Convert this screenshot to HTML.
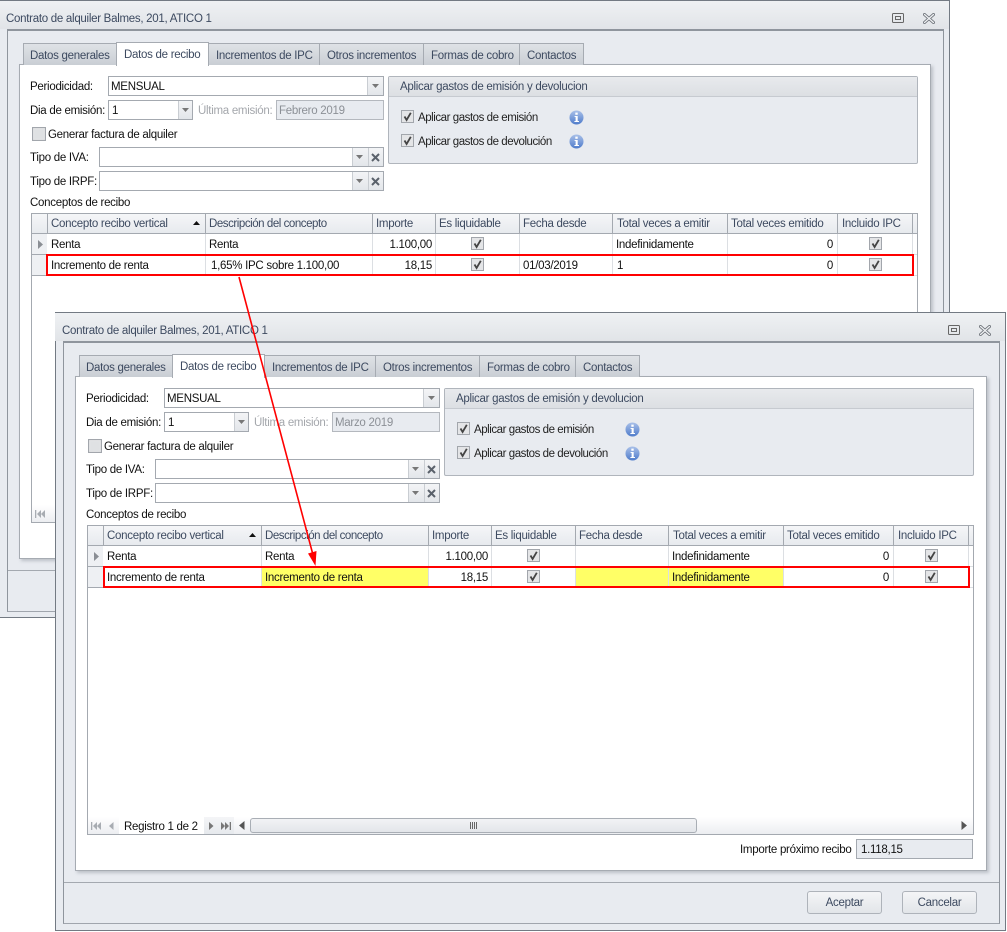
<!DOCTYPE html>
<html lang="es"><head><meta charset="utf-8"><title>Contrato de alquiler</title>
<style>
html,body{margin:0;padding:0;background:#fff}
#p{position:relative;width:1007px;height:932px;overflow:hidden;background:#fff;font:11.5px/14px "Liberation Sans",sans-serif;letter-spacing:-.28px;color:#111}
.w{position:absolute;width:0;height:0}
.w div,.w span,.w svg{position:absolute;box-sizing:border-box}
.b{left:-1px;top:0;width:951px;height:619px;background:#e8ebf0;border:1px solid #737a83;}
.tb{left:-1px;top:1px;width:950px;height:28px;background:linear-gradient(#eff1f3,#e1e4e8)}
.f{left:7px;top:29px;width:937px;height:583px;border:1px solid #8f959d;border-bottom-color:#a0a5ad;border-top-width:2px;background:#e8ebf0}
.sep{left:8px;top:570px;width:935px;height:1px;background:#a4a9b0}
.c{left:19px;top:64px;width:912px;height:495px;background:#fff;border:1px solid #a6abb2;box-shadow:2px 2px 3px rgba(110,115,125,.35)}
.tab{top:43px;height:22px;background:linear-gradient(#dfe2e6,#c9ced4);border:1px solid #a6abb2;border-bottom:0}
.tab.on{top:42px;height:24px;background:#fff;z-index:2}
span{white-space:nowrap;height:14px;margin-top:1px}
.t{color:#3d4a60;z-index:3}
.n{letter-spacing:-.45px}
.bx{background:#fff;border:1px solid #a4a9b0}
.dis{background:#e8ebf0;border:1px solid #b4b8be}
.btn{background:linear-gradient(#f3f4f6,#e3e6ea);border-left:1px solid #c9cdd2}
.g{left:388px;top:76px;width:530px;height:88px;background:#e8ebf0;border:1px solid #b0b5bc;border-radius:2px}
.gh{left:389px;top:77px;width:528px;height:20px;background:linear-gradient(#e8eaed,#dcdfe3);border-bottom:1px solid #c6cad0}
.grid{left:31px;top:213px;width:887px;height:310px;background:#fff;border:1px solid #a4a9b0}
.hd{left:32px;top:214px;width:885px;height:20px;background:linear-gradient(#f5f6f8,#e7eaee);border-bottom:1px solid #a4a9b0}
.ind{left:32px;width:15px;height:21px;background:#eef0f3;border-bottom:1px solid #a4a9b0}
.hl{top:214px;width:1px;height:20px;background:#a4a9b0}
.vl{top:234px;width:1px;height:42px;background:#dcdfe3}
.rl{left:47px;width:870px;height:1px;background:#dcdfe3}
.nav{left:32px;top:505px;width:885px;height:17px;background:linear-gradient(#fff,#eceef1)}
.red{border:2px solid #f00;z-index:5}
.r{text-align:right}
.bt{top:579px;width:75px;height:23px;background:linear-gradient(#f4f5f7,#e2e5e9);border:1px solid #aeb3ba;border-radius:3px;text-align:center;line-height:22px;color:#3d4a60}
</style></head><body>
<div id="p">
<svg width="0" height="0" style="position:absolute"><defs>
<symbol id="ck" viewBox="0 0 13 13"><rect x=".5" y=".5" width="12" height="12" fill="#e4e5e7" stroke="#a2a6ac"/><path d="M3.500 6.500 5.600 10 9.800 2.800" fill="none" stroke="#444" stroke-width="1.800"/></symbol>
<symbol id="uc" viewBox="0 0 13 13"><rect x=".5" y=".5" width="12" height="12" fill="#e4e5e7" stroke="#a2a6ac"/><rect x="2" y="2" width="9" height="9" fill="#dfe1e3"/></symbol>
<symbol id="in" viewBox="0 0 15 15"><defs><linearGradient id="ig" x1="0" y1="0" x2="0" y2="1"><stop offset="0" stop-color="#a9c0e8"/><stop offset="1" stop-color="#4f7ccb"/></linearGradient></defs><circle cx="7.500" cy="7.500" r="7" fill="url(#ig)"/><rect x="6.300" y="2.600" width="2.400" height="2.200" fill="#fff"/><path d="M5.600 6h3.100v5H10v1H5.400v-1h1.200V7H5.600z" fill="#fff"/></symbol>
<symbol id="dn" viewBox="0 0 7 4"><path d="M0 0h7L3.500 4z" fill="#777"/></symbol>
<symbol id="xx" viewBox="0 0 9 9"><path d="M1 1l7 7M8 1L1 8" stroke="#5a616b" stroke-width="2" fill="none"/></symbol>
<symbol id="rw" viewBox="0 0 5 9"><path d="M0 0l5 4.500L0 9z" fill="#8a8e94"/></symbol>
<symbol id="mx" viewBox="0 0 12 10"><rect x=".5" y=".5" width="11" height="9" rx="1" fill="none" stroke="#666"/><rect x="3.500" y="3.500" width="5" height="3" fill="none" stroke="#666"/></symbol>
<symbol id="cl" viewBox="0 0 12 11"><path d="M1.500 1.500l9 8M10.500 1.500l-9 8" stroke="#6a6f76" stroke-width="3" fill="none" stroke-linecap="round"/><path d="M1.500 1.500l9 8M10.500 1.500l-9 8" stroke="#eef0f2" stroke-width="1.400" fill="none" stroke-linecap="round"/></symbol>
</defs></svg>

<!-- WINDOW 1 -->
<div class="w" style="left:0;top:0">
<div class="b" style="height:618px"></div><div class="tb"></div>
<span style="left:6px;top:11px;color:#3d4a60">Contrato de alquiler Balmes, 201, ATICO 1</span>
<svg style="left:892px;top:13px" width="12" height="10"><use href="#mx"/></svg>
<svg style="left:923px;top:13px" width="12" height="11"><use href="#cl"/></svg>
<div class="f"></div><div class="sep"></div><div class="c"></div>
<div class="tab" style="left:23px;width:94px"></div><div class="tab on" style="left:116px;width:93px"></div><div class="tab" style="left:208px;width:112px"></div><div class="tab" style="left:319px;width:105px"></div><div class="tab" style="left:423px;width:97px"></div><div class="tab" style="left:519px;width:65px"></div>
<span class="t" style="left:30px;top:48px">Datos generales</span><span class="t" style="left:124px;top:47px">Datos de recibo</span><span class="t" style="left:216px;top:48px">Incrementos de IPC</span><span class="t" style="left:327px;top:48px">Otros incrementos</span><span class="t" style="left:431px;top:48px">Formas de cobro</span><span class="t" style="left:527px;top:48px">Contactos</span>
<span style="left:30px;top:79px">Periodicidad:</span><div class="bx" style="left:108px;top:76px;width:276px;height:20px"></div><div class="btn" style="left:367px;top:77px;width:16px;height:18px"></div><svg style="left:372px;top:84px" width="7" height="4"><use href="#dn"/></svg><span style="left:111px;top:79px">MENSUAL</span>
<span style="left:30px;top:103px">Dia de emisión:</span><div class="bx" style="left:108px;top:100px;width:85px;height:20px"></div><div class="btn" style="left:178px;top:101px;width:14px;height:18px"></div><svg style="left:182px;top:108px" width="7" height="4"><use href="#dn"/></svg><span style="left:112px;top:103px">1</span>
<span style="left:198px;top:103px;color:#a4a7ac">Última emisión:</span><div class="dis" style="left:276px;top:100px;width:108px;height:20px"></div><span style="left:279px;top:103px;color:#8c9096">Febrero 2019</span>
<svg style="left:32px;top:127px" width="14" height="14"><use href="#uc"/></svg><span style="left:48px;top:127px">Generar factura de alquiler</span>
<span style="left:30px;top:150px">Tipo de IVA:</span><div class="bx" style="left:99px;top:147px;width:285px;height:20px"></div><div class="btn" style="left:352px;top:148px;width:16px;height:18px"></div><div class="btn" style="left:368px;top:148px;width:15px;height:18px"></div><svg style="left:356px;top:155px" width="7" height="4"><use href="#dn"/></svg><svg style="left:371px;top:153px" width="9" height="9"><use href="#xx"/></svg>
<span style="left:30px;top:174px">Tipo de IRPF:</span><div class="bx" style="left:99px;top:171px;width:285px;height:20px"></div><div class="btn" style="left:352px;top:172px;width:16px;height:18px"></div><div class="btn" style="left:368px;top:172px;width:15px;height:18px"></div><svg style="left:356px;top:179px" width="7" height="4"><use href="#dn"/></svg><svg style="left:371px;top:177px" width="9" height="9"><use href="#xx"/></svg>
<div class="g"></div><div class="gh"></div><span class="t" style="left:400px;top:79px">Aplicar gastos de emisión y devolucion</span>
<svg style="left:401px;top:110px" width="13" height="13"><use href="#ck"/></svg><span class="n" style="left:418px;top:110px;color:#222">Aplicar gastos de emisión</span><svg style="left:569px;top:110px" width="15" height="15"><use href="#in"/></svg>
<svg style="left:401px;top:134px" width="13" height="13"><use href="#ck"/></svg><span class="n" style="left:418px;top:134px;color:#222">Aplicar gastos de devolución</span><svg style="left:569px;top:134px" width="15" height="15"><use href="#in"/></svg>
<span style="left:30px;top:195px">Conceptos de recibo</span>
<div class="grid"></div><div class="hd"></div><div class="ind" style="top:234px"></div><div class="ind" style="top:255px"></div>
<div class="hl" style="left:47px"></div><div class="hl" style="left:205px"></div><div class="hl" style="left:372px"></div><div class="hl" style="left:435px"></div><div class="hl" style="left:519px"></div><div class="hl" style="left:612px"></div><div class="hl" style="left:727px"></div><div class="hl" style="left:837px"></div><div class="hl" style="left:912px"></div>
<div class="vl" style="left:205px"></div><div class="vl" style="left:372px"></div><div class="vl" style="left:435px"></div><div class="vl" style="left:519px"></div><div class="vl" style="left:612px"></div><div class="vl" style="left:727px"></div><div class="vl" style="left:837px"></div><div class="vl" style="left:912px"></div>
<div class="rl" style="top:254px"></div><div class="rl" style="top:275px"></div>
<span class="t" style="left:51px;top:216px">Concepto recibo vertical</span><svg style="left:193px;top:221px" width="7" height="4" viewBox="0 0 7 4"><path d="M0 4h7L3.500 0z" fill="#111"/></svg><span class="t n" style="left:209px;top:216px">Descripción del concepto</span><span class="t" style="left:376px;top:216px">Importe</span><span class="t" style="left:439px;top:216px">Es liquidable</span><span class="t" style="left:523px;top:216px">Fecha desde</span><span class="t" style="left:617px;top:216px">Total veces a emitir</span><span class="t" style="left:731px;top:216px">Total veces emitido</span><span class="t" style="left:842px;top:216px">Incluido IPC</span>
<svg style="left:38px;top:240px" width="5" height="9"><use href="#rw"/></svg>
<span style="left:51px;top:237px">Renta</span><span style="left:209px;top:237px">Renta</span><span class="r" style="left:372px;top:237px;width:60px">1.100,00</span><svg style="left:471px;top:237px" width="13" height="13"><use href="#ck"/></svg><span style="left:616px;top:237px">Indefinidamente</span><span class="r" style="left:773px;top:237px;width:60px">0</span><svg style="left:869px;top:237px" width="13" height="13"><use href="#ck"/></svg>
<span style="left:51px;top:258px">Incremento de renta</span><span style="left:211px;top:258px">1,65% IPC sobre 1.100,00</span><span class="r" style="left:372px;top:258px;width:60px">18,15</span><svg style="left:471px;top:258px" width="13" height="13"><use href="#ck"/></svg><span style="left:523px;top:258px">01/03/2019</span><span style="left:617px;top:258px">1</span><span class="r" style="left:773px;top:258px;width:60px">0</span><svg style="left:869px;top:258px" width="13" height="13"><use href="#ck"/></svg>
<div class="red" style="left:46px;top:254px;width:868px;height:22px"></div>
<div class="nav"></div>
<svg style="left:35px;top:510px" width="10" height="8" viewBox="0 0 10 8"><path d="M0 0h1.300v8H0zM6 0v8L2 4zM10 0v8L6 4z" fill="#a8acb2"/></svg>
</div>

<!-- WINDOW 2 -->
<div class="w" style="left:56px;top:312px">
<div class="b"></div><div class="tb"></div>
<span style="left:6px;top:11px;color:#3d4a60">Contrato de alquiler Balmes, 201, ATICO 1</span>
<svg style="left:892px;top:13px" width="12" height="10"><use href="#mx"/></svg>
<svg style="left:923px;top:13px" width="12" height="11"><use href="#cl"/></svg>
<div class="f"></div><div class="sep"></div><div class="c"></div>
<div class="tab" style="left:23px;width:94px"></div><div class="tab on" style="left:116px;width:93px"></div><div class="tab" style="left:208px;width:112px"></div><div class="tab" style="left:319px;width:105px"></div><div class="tab" style="left:423px;width:97px"></div><div class="tab" style="left:519px;width:65px"></div>
<span class="t" style="left:30px;top:48px">Datos generales</span><span class="t" style="left:124px;top:47px">Datos de recibo</span><span class="t" style="left:216px;top:48px">Incrementos de IPC</span><span class="t" style="left:327px;top:48px">Otros incrementos</span><span class="t" style="left:431px;top:48px">Formas de cobro</span><span class="t" style="left:527px;top:48px">Contactos</span>
<span style="left:30px;top:79px">Periodicidad:</span><div class="bx" style="left:108px;top:76px;width:276px;height:20px"></div><div class="btn" style="left:367px;top:77px;width:16px;height:18px"></div><svg style="left:372px;top:84px" width="7" height="4"><use href="#dn"/></svg><span style="left:111px;top:79px">MENSUAL</span>
<span style="left:30px;top:103px">Dia de emisión:</span><div class="bx" style="left:108px;top:100px;width:85px;height:20px"></div><div class="btn" style="left:178px;top:101px;width:14px;height:18px"></div><svg style="left:182px;top:108px" width="7" height="4"><use href="#dn"/></svg><span style="left:112px;top:103px">1</span>
<span style="left:198px;top:103px;color:#a4a7ac">Última emisión:</span><div class="dis" style="left:276px;top:100px;width:108px;height:20px"></div><span style="left:279px;top:103px;color:#8c9096">Marzo 2019</span>
<svg style="left:32px;top:127px" width="14" height="14"><use href="#uc"/></svg><span style="left:48px;top:127px">Generar factura de alquiler</span>
<span style="left:30px;top:150px">Tipo de IVA:</span><div class="bx" style="left:99px;top:147px;width:285px;height:20px"></div><div class="btn" style="left:352px;top:148px;width:16px;height:18px"></div><div class="btn" style="left:368px;top:148px;width:15px;height:18px"></div><svg style="left:356px;top:155px" width="7" height="4"><use href="#dn"/></svg><svg style="left:371px;top:153px" width="9" height="9"><use href="#xx"/></svg>
<span style="left:30px;top:174px">Tipo de IRPF:</span><div class="bx" style="left:99px;top:171px;width:285px;height:20px"></div><div class="btn" style="left:352px;top:172px;width:16px;height:18px"></div><div class="btn" style="left:368px;top:172px;width:15px;height:18px"></div><svg style="left:356px;top:179px" width="7" height="4"><use href="#dn"/></svg><svg style="left:371px;top:177px" width="9" height="9"><use href="#xx"/></svg>
<div class="g"></div><div class="gh"></div><span class="t" style="left:400px;top:79px">Aplicar gastos de emisión y devolucion</span>
<svg style="left:401px;top:110px" width="13" height="13"><use href="#ck"/></svg><span class="n" style="left:418px;top:110px;color:#222">Aplicar gastos de emisión</span><svg style="left:569px;top:110px" width="15" height="15"><use href="#in"/></svg>
<svg style="left:401px;top:134px" width="13" height="13"><use href="#ck"/></svg><span class="n" style="left:418px;top:134px;color:#222">Aplicar gastos de devolución</span><svg style="left:569px;top:134px" width="15" height="15"><use href="#in"/></svg>
<span style="left:30px;top:195px">Conceptos de recibo</span>
<div class="grid"></div><div class="hd"></div><div class="ind" style="top:234px"></div><div class="ind" style="top:255px"></div>
<div style="left:206px;top:255px;width:166px;height:20px;background:#ffff66"></div><div style="left:520px;top:255px;width:207px;height:20px;background:#ffff66"></div>
<div class="hl" style="left:47px"></div><div class="hl" style="left:205px"></div><div class="hl" style="left:372px"></div><div class="hl" style="left:435px"></div><div class="hl" style="left:519px"></div><div class="hl" style="left:612px"></div><div class="hl" style="left:727px"></div><div class="hl" style="left:837px"></div><div class="hl" style="left:912px"></div>
<div class="vl" style="left:205px"></div><div class="vl" style="left:372px"></div><div class="vl" style="left:435px"></div><div class="vl" style="left:519px"></div><div class="vl" style="left:612px"></div><div class="vl" style="left:727px"></div><div class="vl" style="left:837px"></div><div class="vl" style="left:912px"></div>
<div class="rl" style="top:254px"></div><div class="rl" style="top:275px"></div>
<span class="t" style="left:51px;top:216px">Concepto recibo vertical</span><svg style="left:193px;top:221px" width="7" height="4" viewBox="0 0 7 4"><path d="M0 4h7L3.500 0z" fill="#111"/></svg><span class="t n" style="left:209px;top:216px">Descripción del concepto</span><span class="t" style="left:376px;top:216px">Importe</span><span class="t" style="left:439px;top:216px">Es liquidable</span><span class="t" style="left:523px;top:216px">Fecha desde</span><span class="t" style="left:617px;top:216px">Total veces a emitir</span><span class="t" style="left:731px;top:216px">Total veces emitido</span><span class="t" style="left:842px;top:216px">Incluido IPC</span>
<svg style="left:38px;top:240px" width="5" height="9"><use href="#rw"/></svg>
<span style="left:51px;top:237px">Renta</span><span style="left:209px;top:237px">Renta</span><span class="r" style="left:372px;top:237px;width:60px">1.100,00</span><svg style="left:471px;top:237px" width="13" height="13"><use href="#ck"/></svg><span style="left:616px;top:237px">Indefinidamente</span><span class="r" style="left:773px;top:237px;width:60px">0</span><svg style="left:869px;top:237px" width="13" height="13"><use href="#ck"/></svg>
<span style="left:51px;top:258px">Incremento de renta</span><span style="left:209px;top:258px">Incremento de renta</span><span class="r" style="left:372px;top:258px;width:60px">18,15</span><svg style="left:471px;top:258px" width="13" height="13"><use href="#ck"/></svg><span style="left:616px;top:258px">Indefinidamente</span><span class="r" style="left:773px;top:258px;width:60px">0</span><svg style="left:869px;top:258px" width="13" height="13"><use href="#ck"/></svg>
<div class="red" style="left:47px;top:254px;width:867px;height:22px"></div>
<div class="nav"></div>
<div style="left:63px;top:505px;width:85px;height:17px;background:#fff"></div>
<div style="left:148px;top:505px;width:30px;height:17px;background:linear-gradient(#f4f5f7,#e6e9ed)"></div>
<svg style="left:35px;top:510px" width="10" height="8" viewBox="0 0 10 8"><path d="M0 0h1.300v8H0zM6 0v8L2 4zM10 0v8L6 4z" fill="#a8acb2"/></svg>
<svg style="left:53px;top:510px" width="5" height="8" viewBox="0 0 5 8"><path d="M4.500 0v8L0 4z" fill="#a8acb2"/></svg>
<span style="left:68px;top:507px">Registro 1 de 2</span>
<svg style="left:153px;top:510px" width="5" height="8" viewBox="0 0 5 8"><path d="M0 0v8l4.500-4z" fill="#777"/></svg>
<svg style="left:165px;top:510px" width="10" height="8" viewBox="0 0 10 8"><path d="M0 0v8l4-4zM4 0v8l4-4zM8.700 0H10v8H8.700z" fill="#777"/></svg>
<svg style="left:183px;top:509px" width="6" height="9" viewBox="0 0 6 9"><path d="M5.500 0v9L0 4.500z" fill="#555"/></svg>
<div style="left:194px;top:506px;width:447px;height:15px;background:linear-gradient(#f2f3f5,#e3e6ea);border:1px solid #a9aeb5;border-radius:3px"></div>
<svg style="left:414px;top:510px" width="7" height="7" viewBox="0 0 7 7"><path d="M.5 0v7M2.500 0v7M4.500 0v7M6.500 0v7" stroke="#666" fill="none"/></svg>
<svg style="left:905px;top:509px" width="6" height="9" viewBox="0 0 6 9"><path d="M.5 0v9L6 4.500z" fill="#555"/></svg>
<span style="left:684px;top:530px">Importe próximo recibo</span>
<div class="dis" style="left:800px;top:527px;width:117px;height:20px;border-color:#a4a9b0"></div><span style="left:805px;top:530px">1.118,15</span>
<div class="bt" style="left:751px">Aceptar</div><div class="bt" style="left:846px">Cancelar</div>
</div>

<!-- ARROW -->
<svg style="position:absolute;left:0;top:0;z-index:9" width="1007" height="932" viewBox="0 0 1007 932"><path d="M239 277 312.500 553" stroke="#f00" stroke-width="1.600" fill="none"/><path d="M315.500 566 308 553.500 316.500 551z" fill="#f00"/></svg>
</div>
</body></html>
